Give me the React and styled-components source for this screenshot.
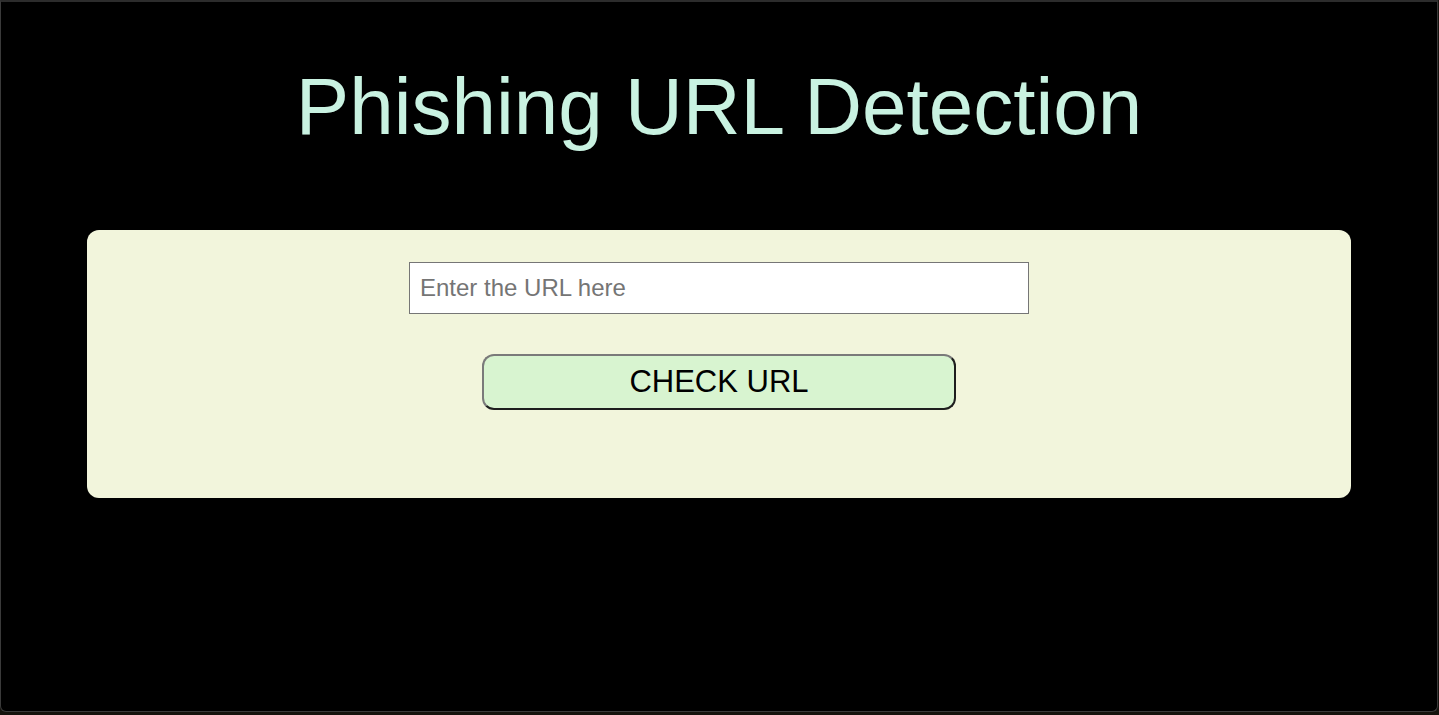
import React from "react";
import styled, { createGlobalStyle } from "styled-components";

const Global = createGlobalStyle`
  html, body { margin: 0; padding: 0; background: #15130d; }
  body { font-family: "Liberation Sans", Arial, sans-serif; }
  * { box-sizing: border-box; }
`;

const Window = styled.div`
  width: 1438px;
  height: 712px;
  background: #000;
  border: 1px solid #3a3a3a;
  border-top: 2px solid #2c2c2c;
  border-radius: 0 0 6px 6px;
  display: flex;
  flex-direction: column;
  align-items: center;
`;

const Title = styled.h1`
  margin: 59px 0 0;
  font-family: "Liberation Sans", Arial, sans-serif;
  font-weight: 400;
  font-size: 80px;
  line-height: 92px;
  color: #c9f2e1;
  text-align: center;
`;

const Card = styled.form`
  margin-top: 77px;
  width: 1264px;
  height: 268px;
  background: #f2f5dc;
  border-radius: 12px;
  padding-top: 32px;
  display: flex;
  flex-direction: column;
  align-items: center;
  gap: 40px;
`;

const UrlInput = styled.input`
  width: 620px;
  height: 52px;
  border: 1px solid #767676;
  background: #fff;
  padding: 0 10px;
  font-family: "Liberation Sans", Arial, sans-serif;
  font-size: 24px;
  color: #000;
  outline: none;
  &::placeholder { color: #757575; }
`;

const CheckButton = styled.button`
  width: 474px;
  height: 56px;
  background: #d8f4d0;
  border: 2px solid;
  border-color: #7a7a7a #1e1e1e #1e1e1e #7a7a7a;
  border-radius: 12px;
  font-family: "Liberation Sans", Arial, sans-serif;
  font-size: 31px;
  color: #000;
  padding: 0;
  cursor: pointer;
`;

export default function App() {
  return (
    <>
      <Global />
      <Window>
        <Title>Phishing URL Detection</Title>
        <Card onSubmit={(e) => e.preventDefault()}>
          <UrlInput type="text" placeholder="Enter the URL here" />
          <CheckButton type="submit">CHECK URL</CheckButton>
        </Card>
      </Window>
    </>
  );
}
